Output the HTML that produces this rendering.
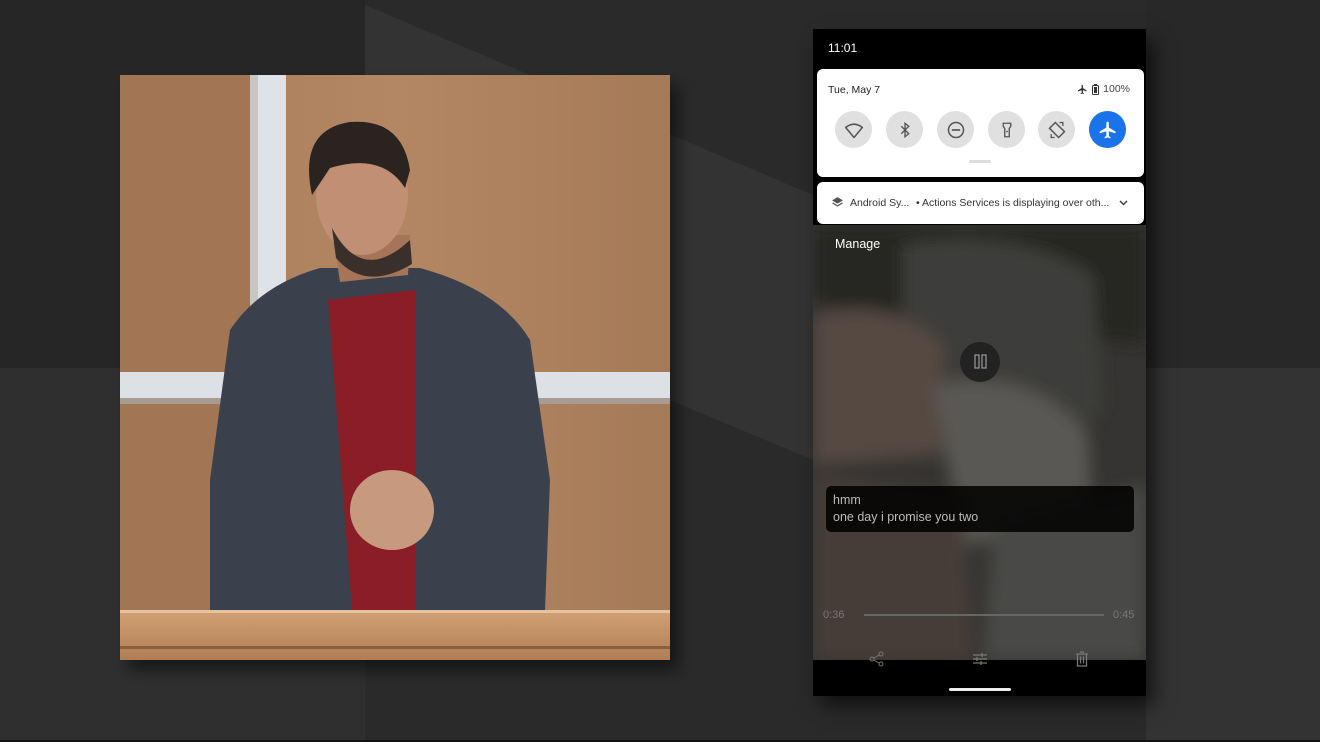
<!DOCTYPE html>
<html><head><meta charset="utf-8"><style>
*{margin:0;padding:0;box-sizing:border-box}
body{width:1320px;height:742px;overflow:hidden;background:#2a2a2a;font-family:"Liberation Sans",Arial,sans-serif;position:relative}
.abs{position:absolute}
.phone{left:813px;top:29px;width:333px;height:667px;background:#000;box-shadow:8px 10px 18px rgba(0,0,0,.6);overflow:hidden}
.qs{left:4px;top:40px;width:327px;height:108px;background:#fff;border-radius:6px}
.tile{position:absolute;top:42px;width:37px;height:37px;border-radius:50%;background:#e0e0e0;display:flex;align-items:center;justify-content:center}
.notif{left:4px;top:153px;width:327px;height:42px;background:#fff;border-radius:6px;font-size:10.5px;color:#333}
</style></head><body>
<svg class="abs" style="left:0;top:0" width="1320" height="742">
<defs>
<linearGradient id="wood" x1="0" x2="1"><stop offset="0" stop-color="#a97c58"/><stop offset=".5" stop-color="#b38763"/><stop offset="1" stop-color="#a57a57"/></linearGradient>
<linearGradient id="pod" x1="0" y1="0" x2="0" y2="1"><stop offset="0" stop-color="#d0a074"/><stop offset="1" stop-color="#b07d55"/></linearGradient>
<filter id="bl"><feGaussianBlur stdDeviation="8"/></filter>
</defs>
<rect width="1320" height="742" fill="#2a2a2a"/>
<rect x="0" y="0" width="365" height="368" fill="#262626"/>
<rect x="0" y="368" width="365" height="374" fill="#2f2f2f"/>
<polygon points="365,5 813,195 813,460 365,272" fill="#333"/>
<rect x="1146" y="0" width="174" height="368" fill="#282828"/>
<rect x="1146" y="368" width="174" height="374" fill="#333"/>
<rect x="0" y="740" width="1320" height="2" fill="#111"/>
<rect x="128" y="85" width="550" height="585" fill="rgba(0,0,0,.5)" filter="url(#bl)"/>
<rect x="120" y="75" width="550" height="585" fill="url(#wood)"/>
<rect x="120" y="75" width="130" height="585" fill="#a27654"/>
<rect x="250" y="75" width="8" height="300" fill="#c9c6c2"/>
<rect x="258" y="75" width="28" height="300" fill="#dfe2e6"/>
<rect x="120" y="372" width="550" height="26" fill="#dde0e4"/>
<rect x="120" y="398" width="550" height="6" fill="#a89c92"/>
<path d="M230,330 Q260,285 320,268 L420,268 Q500,290 530,340 L550,480 L545,610 L210,610 L210,480 Z" fill="#3a414c"/>
<path d="M328,300 L415,290 L415,610 L352,610 Z" fill="#8b1d27"/>
<path d="M333,235 L410,235 L408,275 L340,282 Z" fill="#a67458"/>
<ellipse cx="362" cy="195" rx="46" ry="60" fill="#c08f74"/>
<path d="M312,195 Q298,130 350,122 Q402,118 410,170 L405,188 Q382,152 330,168 Z" fill="#2a2320"/>
<path d="M332,228 Q362,285 410,240 L412,264 Q365,292 336,258 Z" fill="#3a302b"/>
<ellipse cx="392" cy="510" rx="42" ry="40" fill="#c79a80"/>
<rect x="120" y="612" width="550" height="48" fill="url(#pod)"/>
<rect x="120" y="646" width="550" height="3" fill="#8a5f3e"/>
<rect x="120" y="610" width="550" height="3" fill="#e6c3a0"/>
</svg>
<div class="abs phone">
  <div class="abs" style="left:0;top:196px;width:333px;height:435px;overflow:hidden">
    <svg width="333" height="435">
      <rect width="333" height="435" fill="#353432"/>
      <g filter="url(#bl)">
      <path d="M0,0 L333,0 L333,120 L0,80 Z" fill="#262524"/>
      <path d="M90,20 Q200,0 280,50 L290,180 Q260,240 150,250 L90,200 Z" fill="#3e3d3b"/>
      <path d="M0,90 Q80,70 130,120 L125,230 L0,240 Z" fill="#574a43"/>
      <path d="M120,160 Q220,140 275,210 L280,300 L150,320 Z" fill="#5a5855"/>
      <path d="M0,250 L150,270 L160,435 L0,435 Z" fill="#463d38"/>
      <path d="M180,300 L333,260 L333,435 L170,435 Z" fill="#4a4947"/>
      </g>
      <circle cx="167" cy="137" r="20" fill="#222"/>
      <rect x="162" y="130" width="4" height="13" fill="none" stroke="#999" stroke-width="1.2"/>
      <rect x="169" y="130" width="4" height="13" fill="none" stroke="#999" stroke-width="1.2"/>
    </svg>
  </div>
  <div class="abs" style="left:15px;top:12px;color:#fff;font-size:12px">11:01</div>
  <div class="abs qs">
    <div class="abs" style="left:11px;top:15px;font-size:10.5px;color:#222">Tue, May 7</div>
    <div class="abs" style="right:14px;top:14px;font-size:10.5px;color:#444;display:flex;align-items:center;gap:4px">
      <svg width="11" height="11" viewBox="0 0 24 24"><path fill="#333" d="M21 16v-2l-8-5V3.5a1.5 1.5 0 0 0-3 0V9l-8 5v2l8-2.5V19l-2 1.5V22l3.5-1 3.5 1v-1.5L13 19v-5.5z"/></svg>
      <svg width="7" height="11" viewBox="0 0 7 11"><rect x="0.5" y="1.5" width="6" height="9" rx="1" fill="none" stroke="#333"/><rect x="2" y="0" width="3" height="1.5" fill="#333"/><rect x="2" y="3" width="3" height="6" fill="#333"/></svg>100%</div>
    <div class="tile" style="left:18px"><svg width="20" height="20" viewBox="0 0 24 24"><path d="M2 9 Q12 1 22 9 L12 21 Z" fill="none" stroke="#555" stroke-width="1.8" stroke-linejoin="round"/></svg></div>
    <div class="tile" style="left:69px"><svg width="18" height="18" viewBox="0 0 24 24"><path d="M7 7l10 10-5 4V3l5 4L7 17" fill="none" stroke="#555" stroke-width="1.8"/></svg></div>
    <div class="tile" style="left:120px"><svg width="20" height="20" viewBox="0 0 24 24"><circle cx="12" cy="12" r="9" fill="none" stroke="#555" stroke-width="1.8"/><path d="M7 12h10" stroke="#555" stroke-width="2"/></svg></div>
    <div class="tile" style="left:171px"><svg width="18" height="18" viewBox="0 0 24 24"><path d="M7 3h10v4l-2 3v11H9V10L7 7z" fill="none" stroke="#555" stroke-width="1.8"/><circle cx="12" cy="14" r="1.2" fill="#555"/></svg></div>
    <div class="tile" style="left:221px"><svg width="20" height="20" viewBox="0 0 24 24"><path d="M10 3 L3 10 L14 21 L21 14 Z" fill="none" stroke="#555" stroke-width="1.8"/><path d="M15 3h4v4M9 21H5v-4" fill="none" stroke="#555" stroke-width="1.6"/></svg></div>
    <div class="tile" style="left:272px;background:#1a73e8"><svg width="20" height="20" viewBox="0 0 24 24"><path fill="#fff" d="M21 16v-2l-8-5V3.5a1.5 1.5 0 0 0-3 0V9l-8 5v2l8-2.5V19l-2 1.5V22l3.5-1 3.5 1v-1.5L13 19v-5.5z"/></svg></div>
    <div class="abs" style="left:152px;top:91px;width:22px;height:3px;border-radius:2px;background:#ddd"></div>
  </div>
  <div class="abs notif">
    <svg class="abs" style="left:14px;top:14px" width="13" height="13" viewBox="0 0 24 24"><path fill="#555" d="M12 2 2 8l10 6 10-6zm-8 10-2 1.5 10 6 10-6-2-1.5-8 5z"/></svg>
    <div class="abs" style="left:33px;top:15px">Android Sy...</div>
    <div class="abs" style="left:99px;top:15px">• Actions Services is displaying over oth...</div>
    <svg class="abs" style="left:302px;top:18px" width="9" height="6" viewBox="0 0 9 6"><path d="M1 1l3.5 3.5L8 1" fill="none" stroke="#444" stroke-width="1.5"/></svg>
  </div>
  <div class="abs" style="left:22px;top:208px;color:#fff;font-size:12.5px">Manage</div>
  <div class="abs" style="left:13px;top:457px;width:308px;height:46px;background:rgba(0,0,0,.85);border-radius:5px;color:#bbb;font-size:12.5px;line-height:17px;padding:6px 7px">hmm<br>one day i promise you two</div>
  <div class="abs" style="left:10px;top:580px;color:#777;font-size:11px">0:36</div>
  <div class="abs" style="left:300px;top:580px;color:#777;font-size:11px">0:45</div>
  <div class="abs" style="left:51px;top:585px;width:240px;height:2px;background:#666"></div>
  <div class="abs" style="left:0;top:631px;width:333px;height:36px;background:#000"></div>
  <svg class="abs" style="left:56px;top:622px" width="16" height="16" viewBox="0 0 16 16"><circle cx="12" cy="3" r="2" fill="none" stroke="#777"/><circle cx="3" cy="8" r="2" fill="none" stroke="#777"/><circle cx="12" cy="13" r="2" fill="none" stroke="#777"/><path d="M5 7l5-3M5 9l5 3" stroke="#777"/></svg>
  <svg class="abs" style="left:159px;top:622px" width="16" height="16" viewBox="0 0 16 16"><path d="M1 4h14M1 8h14M1 12h14" stroke="#777" stroke-width="1.3"/><path d="M10 2v4M5 6v4M9 10v4" stroke="#777" stroke-width="1.3"/></svg>
  <svg class="abs" style="left:262px;top:622px" width="14" height="16" viewBox="0 0 14 16"><path d="M1 3h12M5 1h4M2.5 3v12h9V3M5.5 5.5v7M8.5 5.5v7" fill="none" stroke="#777" stroke-width="1.3"/></svg>
  <div class="abs" style="left:136px;top:659px;width:62px;height:3px;background:#eee;border-radius:2px"></div>
</div>
</body></html>
